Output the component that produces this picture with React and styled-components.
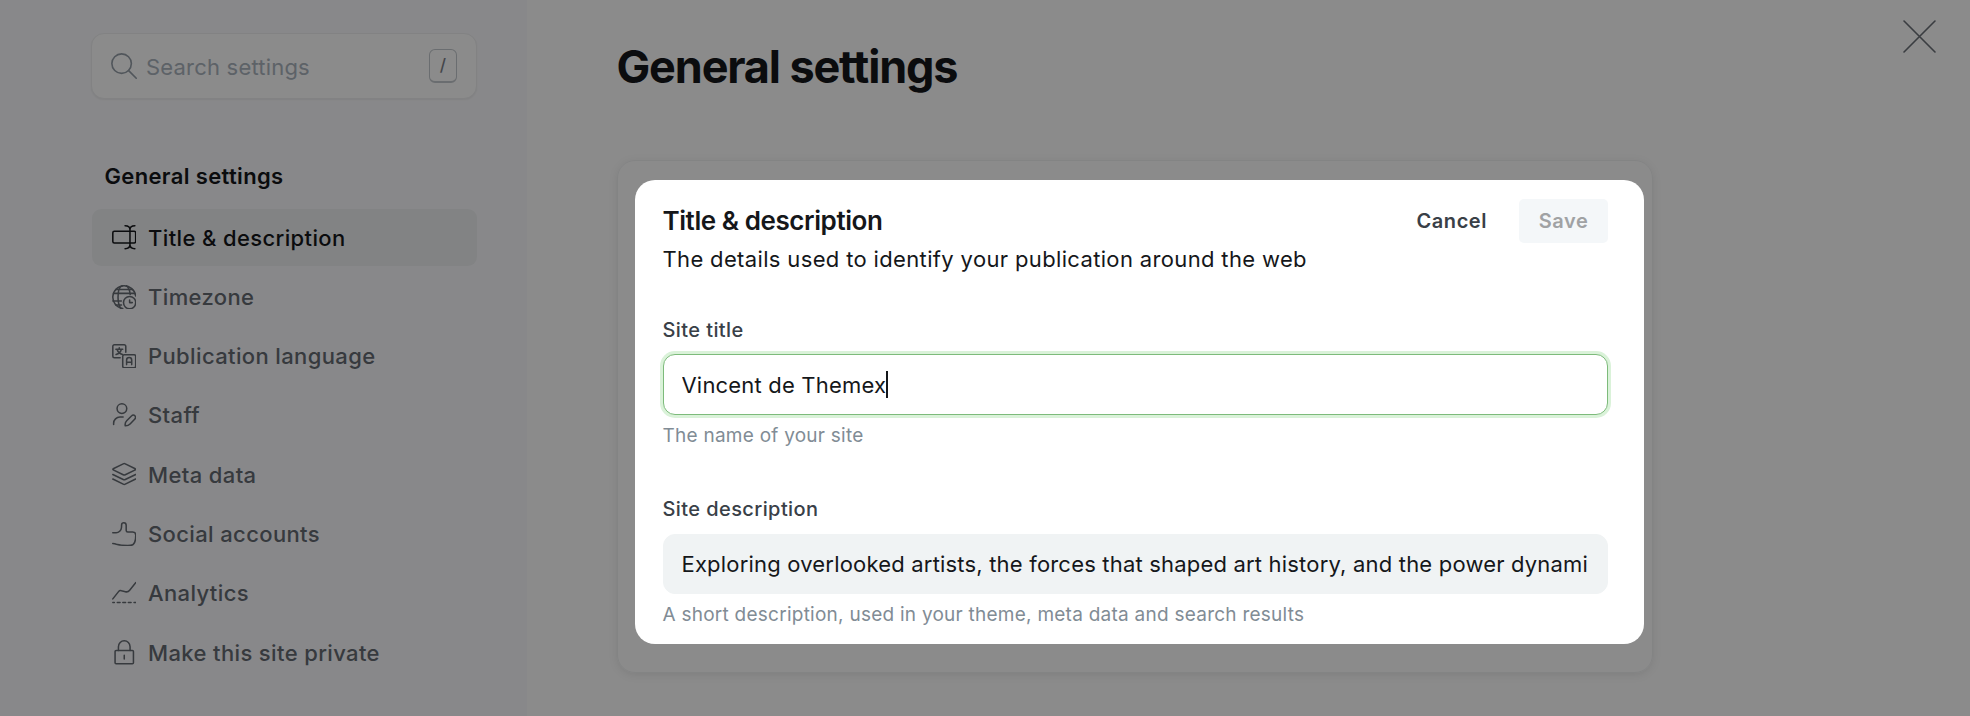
import React, { useState } from 'react'
import styled, { createGlobalStyle } from 'styled-components'

// Constants
const navItems = [
    { icon: 'title', label: 'Title & description' },
    { icon: 'timezone', label: 'Timezone' },
    { icon: 'language', label: 'Publication language' },
    { icon: 'staff', label: 'Staff' },
    { icon: 'layers', label: 'Meta data' },
    { icon: 'thumb', label: 'Social accounts' },
    { icon: 'chart', label: 'Analytics' },
    { icon: 'lock', label: 'Make this site private' },
]

const icons = {
    title: (
        <>
            <rect x="0.8" y="6.2" width="22.4" height="11.4" rx="1.5" />
            <path d="M12.8 .8c3 0 4.800 1.300 4.800 3.800v14.800c0 2.500-1.800 3.800-4.800 3.800M22.4 .8c-3 0-4.800 1.300-4.800 3.800M22.4 23.200c-3 0-4.800-1.300-4.800-3.800" />
        </>
    ),
    timezone: (
        <>
            <path d="M10.5 23.150A11.250 11.250 0 1 1 23.200 10.700" />
            <path d="M8.6 22.700C6.900 20.500 5.900 16.500 5.900 12 5.900 6 7.700 1.500 10 .800M14 .800c1.900.900 3.300 4.200 3.800 8.500M.900 15.700h8.300M1.400 8.200h20.900M3.700 4.500h16.600M3.700 19.500h5.600" />
            <circle cx="17.25" cy="17.25" r="6" />
            <path d="M19.9 17.250h-2.650V14.600" />
        </>
    ),
    language: (
        <>
            <path d="M8 13.500H2.300A1.500 1.500 0 0 1 .8 12V2.300A1.500 1.500 0 0 1 2.300.8H12a1.500 1.500 0 0 1 1.500 1.500V8" />
            <path d="M3.8 5.200h6.700M7.100 3.800v1.400M9.200 5.200c-.6 2.300-2.600 4.400-5.200 5.100M5 5.400c.7 2.300 2.700 4.200 5.300 4.900" />
            <rect x="10.5" y="10.5" width="12.7" height="12.7" rx="1.5" />
            <path d="M14.3 20.200v-4.400a2.500 2.500 0 0 1 5 0v4.400M14.300 17.800h5" />
        </>
    ),
    staff: (
        <>
            <circle cx="9.7" cy="5.5" r="4.75" />
            <path d="M1.6 21v-1.100a6.200 6.200 0 0 1 6.200-6.200h3.100" />
            <path d="M13 22.300c-.4-1.800.1-3.600 1.400-4.900l4.900-4.900a2.100 2.100 0 0 1 3.100 0 2.100 2.100 0 0 1 0 3.100l-4.700 4.900c-1.300 1.300-2.900 1.900-4.700 1.800z" />
        </>
    ),
    layers: (
        <>
            <path d="M11 1.800L1.200 6.600a.6.600 0 0 0 0 1.100l9.800 4.800a2.300 2.300 0 0 0 2 0l9.800-4.800a.6.600 0 0 0 0-1.100L13 1.800a2.300 2.300 0 0 0-2 0z" />
            <path d="M.8 12.200l10.200 5a2.300 2.300 0 0 0 2 0l10.200-5M.8 16.700l10.200 5a2.300 2.300 0 0 0 2 0l10.200-5" />
        </>
    ),
    thumb: (
        <path d="M.75 10.600H4c2.600 0 5.100-2.200 5.300-5.200l.1-2.500A2.200 2.200 0 0 1 11.600.8c1.500 0 2.300 1.100 2.300 2.600v4.900c0 .9.700 1.500 1.600 1.500h4.700c2.200 0 3.100 1.300 3.100 3.100 0 5.500-1.200 9.900-5.200 10-6.300.2-11-.4-13.800-1.200-1.200-.4-2.300-.6-3.550-.7" />
    ),
    chart: (
        <>
            <path d="M.8 17.500l5.600-7.100a2.500 2.500 0 0 1 2.900-.8l3.800.9a4 4 0 0 0 4.200-1.500L23.200 1.600" />
            <path d="M.8 21h1.500M5.200 21h2.700M10.600 21h2.700M16 21h2.700M21.600 21h1.600" />
        </>
    ),
    lock: (
        <>
            <rect x="3" y="10.2" width="18" height="13" rx="1" />
            <path d="M6.3 10.200V6.500a5.700 5.700 0 0 1 11.400 0v3.700M12 15v3.700" />
        </>
    ),
    search: (
        <>
            <circle cx="9.8" cy="9.8" r="9" />
            <path d="M16.3 16.300l7 7" />
        </>
    ),
    close: <path d="M.75 23.250l22.500-22.500M23.250 23.250L.75.750" />,
}

// Styled components
const GlobalStyle = createGlobalStyle`
    * {
        box-sizing: border-box;
    }
    body {
        margin: 0;
        overflow: hidden;
        background: #ffffff;
        color: #15171a;
        font-family: 'Inter', 'Liberation Sans', sans-serif;
    }
`
const Layout = styled.div`
    display: flex;
    width: 100vw;
    height: 100vh;
    overflow: hidden;
`
const Backdrop = styled.div`
    position: fixed;
    inset: 0;
    z-index: 10;
    background-color: rgba(0, 0, 0, 0.455);
`
const Svg = styled.svg`
    flex: none;
    width: ${(props) => props.$size}px;
    height: ${(props) => props.$size}px;
    fill: none;
    stroke: currentColor;
    stroke-width: ${(props) => props.$stroke || 1.5};
    stroke-linecap: round;
    stroke-linejoin: round;
`

const Sidebar = styled.aside`
    flex: none;
    width: 527px;
    padding: 33px 50px 0 91px;
    background-color: #fafafd;
`
const SearchBox = styled.label`
    display: flex;
    align-items: center;
    height: 66px;
    padding: 0 19px;
    border: 1px solid #eeeff1;
    border-radius: 13px;
    background-color: #ffffff;
    box-shadow: 0 1px 2px rgba(0, 0, 0, 0.06);
    color: #959ea8;
`
const SearchInput = styled.input`
    flex: 1;
    min-width: 0;
    margin-left: 9px;
    padding: 1px 0 0;
    border: none;
    outline: none;
    background: transparent;
    font: 400 22px 'Inter', sans-serif;
    letter-spacing: 0.2px;
    &::placeholder {
        color: #abb4be;
        opacity: 1;
    }
`
const Key = styled.kbd`
    display: flex;
    align-items: center;
    justify-content: center;
    width: 28px;
    height: 34px;
    margin-top: -1px;
    border: 1px solid #c3c8cd;
    border-bottom-width: 2px;
    border-radius: 6px;
    color: #7c8189;
    font: 500 17px 'Inter', sans-serif;
`
const NavHeading = styled.h2`
    margin: 61px 0 17px 13.5px;
    font-size: 22px;
    font-weight: 600;
    line-height: 32px;
    letter-spacing: 0.35px;
`
const NavList = styled.nav`
    display: flex;
    flex-direction: column;
    gap: 2.3px;
`
const NavItem = styled.button`
    display: flex;
    align-items: center;
    gap: 12px;
    height: 57px;
    padding: 0 19.5px;
    margin-left: 1px;
    border: none;
    border-radius: 9px;
    background-color: ${(props) => (props.$active ? '#eff1f3' : 'transparent')};
    color: ${(props) => (props.$active ? '#15171a' : '#656b73')};
    font: 500 22px 'Inter', sans-serif;
    letter-spacing: 0.37px;
    cursor: pointer;
`

const Content = styled.main`
    flex: 1;
    padding: 40px 0 0 89.5px;
`
const ContentHeader = styled.header`
    display: flex;
    justify-content: space-between;
    align-items: flex-start;
    padding-right: 34.5px;
`
const PageTitle = styled.h1`
    margin: 0;
    font-size: 45px;
    font-weight: 700;
    line-height: 54px;
    letter-spacing: -1.15px;
`
const CloseButton = styled.button`
    display: flex;
    margin-top: -20px;
    padding: 0;
    border: none;
    background: transparent;
    color: #6b7078;
    cursor: pointer;
`
const Card = styled.section`
    width: 1036px;
    height: 513px;
    margin-top: 66px;
    padding: 18.5px 0 0 17.5px;
    border: 1px solid #f1f2f3;
    border-radius: 18px;
    box-shadow: 0 2px 10px rgba(0, 0, 0, 0.09);
`
const Panel = styled.form`
    position: relative;
    z-index: 20;
    width: 1009px;
    height: 464.5px;
    padding: 19px 36px 0 27.5px;
    border-radius: 20px;
    background-color: #ffffff;
`
const PanelHeader = styled.div`
    display: flex;
    align-items: center;
    height: 44px;
`
const PanelTitle = styled.h3`
    flex: 1;
    margin: 0;
    font-size: 26px;
    font-weight: 600;
    line-height: 32px;
    letter-spacing: -0.43px;
`
const Button = styled.button`
    height: 44px;
    padding: 0;
    border: none;
    border-radius: 5px;
    background: transparent;
    color: #394047;
    font: 600 20px 'Inter', sans-serif;
    letter-spacing: 0.55px;
    cursor: pointer;
`
const SaveButton = styled(Button)`
    width: 89px;
    margin-left: 32px;
    background-color: #f4f7f9;
    color: #a0a2a4;
`
const PanelText = styled.p`
    margin: 0;
    font-size: 22px;
    line-height: 32px;
    letter-spacing: 0.35px;
`
const Field = styled.div`
    display: flex;
    flex-direction: column;
    margin-top: ${(props) => props.$top}px;
`
const Label = styled.label`
    color: #394047;
    font-size: 20px;
    font-weight: 500;
    line-height: 28px;
    letter-spacing: 0.41px;
`
const InputBox = styled.div`
    display: flex;
    align-items: center;
    height: ${(props) => (props.$focused ? 61 : 60)}px;
    margin-top: ${(props) => (props.$focused ? 10 : 11)}px;
    padding: ${(props) => (props.$focused ? '1px 18px 0' : '0 18px')};
    border: 1px solid ${(props) => (props.$focused ? '#7dbb7b' : '#f0f3f4')};
    border-radius: 12px;
    background-color: ${(props) => (props.$focused ? '#ffffff' : '#f0f3f4')};
    box-shadow: ${(props) => (props.$focused ? '0 0 0 3px #daf2d9' : 'none')};
    font-size: 22px;
    letter-spacing: 0.19px;
`
const InputText = styled.span`
    overflow: hidden;
    white-space: nowrap;
`
const Caret = styled.span`
    flex: none;
    width: 2px;
    height: 27px;
    background-color: #15171a;
`
const Hint = styled.span`
    margin-top: 7px;
    color: #818c95;
    font-size: 19px;
    line-height: 28px;
    letter-spacing: 0.25px;
`

const Icon = ({ name, size = 24.5, stroke }) => (
    <Svg viewBox="0 0 24 24" $size={size} $stroke={stroke}>
        {icons[name]}
    </Svg>
)

const TextField = ({ label, value, hint, focused, top }) => (
    <Field $top={top}>
        <Label>{label}</Label>
        <InputBox $focused={focused}>
            <InputText>{value}</InputText>
            {focused && <Caret />}
        </InputBox>
        <Hint>{hint}</Hint>
    </Field>
)

const App = () => {
    // States
    const [activeItem, setActiveItem] = useState(0)

    return (
        <>
            <GlobalStyle />
            <Layout>
                <Sidebar>
                    <SearchBox>
                        <Icon name="search" size={26} />
                        <SearchInput placeholder="Search settings" />
                        <Key>/</Key>
                    </SearchBox>
                    <NavHeading>General settings</NavHeading>
                    <NavList>
                        {navItems.map((item, index) => (
                            <NavItem key={item.label} $active={activeItem === index} onClick={() => setActiveItem(index)}>
                                <Icon name={item.icon} />
                                {item.label}
                            </NavItem>
                        ))}
                    </NavList>
                </Sidebar>
                <Content>
                    <ContentHeader>
                        <PageTitle>General settings</PageTitle>
                        <CloseButton>
                            <Icon name="close" size={33} stroke={1.2} />
                        </CloseButton>
                    </ContentHeader>
                    <Card>
                        <Panel onSubmit={(e) => e.preventDefault()}>
                            <PanelHeader>
                                <PanelTitle>Title &amp; description</PanelTitle>
                                <Button type="button">Cancel</Button>
                                <SaveButton disabled>Save</SaveButton>
                            </PanelHeader>
                            <PanelText>The details used to identify your publication around the web</PanelText>
                            <TextField label="Site title" value="Vincent de Themex" hint="The name of your site" top={41} focused />
                            <TextField
                                label="Site description"
                                value="Exploring overlooked artists, the forces that shaped art history, and the power dynami"
                                hint="A short description, used in your theme, meta data and search results"
                                top={45}
                            />
                        </Panel>
                    </Card>
                </Content>
            </Layout>
            <Backdrop />
        </>
    )
}

export default App
